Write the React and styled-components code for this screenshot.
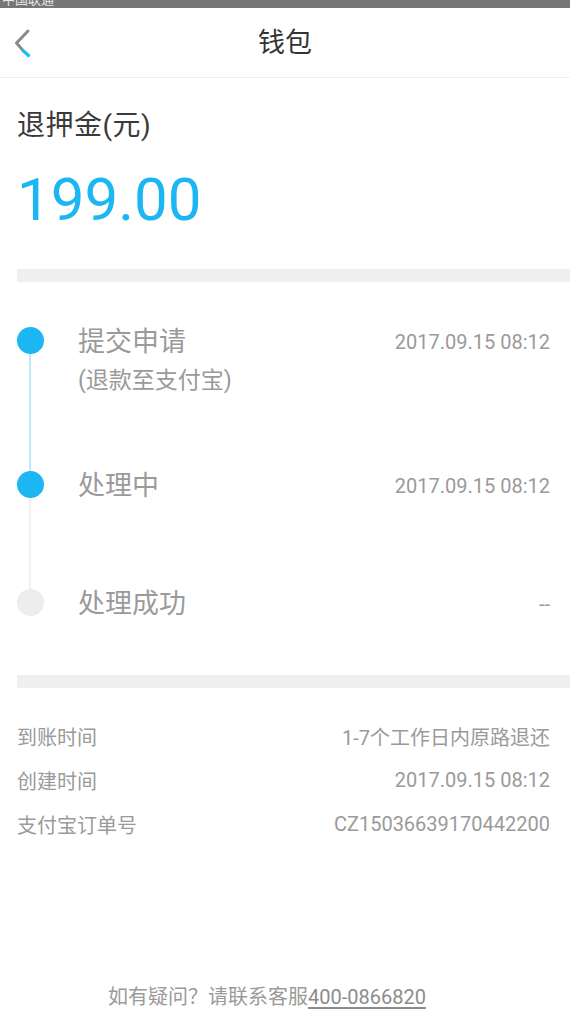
import React from "react";
import styled, { createGlobalStyle } from "styled-components";

const GlobalStyle = createGlobalStyle`
  html, body { margin: 0; padding: 0; background: #fff; }
  body { font-family: Roboto, "Noto Sans CJK SC", "Noto Sans", sans-serif; }
  * { box-sizing: border-box; }
`;

const Page = styled.div`
  min-height: 1024px;
  display: flex;
  flex-direction: column;
  background: #fff;
`;

const StatusBar = styled.div`
  height: 8px;
  background: #767676;
  overflow: hidden;
`;

const StatusText = styled.span`
  display: block;
  margin-top: -7px;
  padding-left: 2px;
  font-size: 13px;
  line-height: 14px;
  color: #e6e6e6;
`;

const NavBar = styled.header`
  height: 70px;
  display: grid;
  grid-template-columns: 70px 1fr 70px;
  align-items: center;
  border-bottom: 1px solid #efefef;
`;

const BackButton = styled.button`
  border: 0;
  background: none;
  padding: 0 0 0 12px;
  height: 100%;
  display: flex;
  align-items: center;
  cursor: pointer;
`;

const NavTitle = styled.h1`
  margin: 0;
  text-align: center;
  font-size: 27px;
  font-weight: 400;
  color: #333;
  line-height: 70px;
`;

const AmountBlock = styled.section`
  padding: 30px 17px 34px;
`;

const AmountLabel = styled.div`
  font-size: 28px;
  line-height: 36px;
  letter-spacing: 0.5px;
  color: #3a3a3a;
`;

const Amount = styled.div`
  margin-top: 21px;
  font-size: 60px;
  line-height: 70px;
  color: #1cb6f2;
`;

const Divider = styled.div`
  height: 13px;
  margin-left: 17px;
  background: #efefef;
`;

const Timeline = styled.section`
  padding: 45px 20px 0 17px;
`;

const Step = styled.div`
  display: grid;
  grid-template-columns: 26px 1fr auto;
  column-gap: 35px;
  height: ${(p) => p.$h}px;
`;

const Rail = styled.div`
  display: flex;
  flex-direction: column;
  align-items: center;
`;

const Dot = styled.div`
  width: 27px;
  height: 27px;
  flex: none;
  border-radius: 50%;
  background: ${(p) => (p.$done ? "#1cb6f2" : "#ededed")};
`;

const Connector = styled.div`
  flex: 1;
  width: 2px;
  background: ${(p) => p.$color || "transparent"};
`;

const StepBody = styled.div`
  padding-top: 2px;
`;

const StepTitle = styled.div`
  font-size: 27px;
  line-height: 27px;
  color: #9a9a9a;
`;

const StepNote = styled.div`
  margin-top: 10px;
  font-size: 23px;
  line-height: 30px;
  color: #9a9a9a;
`;

const StepTime = styled.div`
  padding-top: 2px;
  font-size: 20px;
  line-height: 27px;
  color: #9a9a9a;
  text-align: right;
`;

const Info = styled.section`
  padding: 26px 20px 0 17px;
`;

const InfoRow = styled.div`
  display: flex;
  justify-content: space-between;
  align-items: center;
  height: 44px;
  font-size: 20px;
  color: #9a9a9a;
`;

const Footer = styled.footer`
  margin-top: auto;
  padding: 0 36px 12px 0;
  text-align: center;
  font-size: 20px;
  line-height: 30px;
  color: #9a9a9a;
`;

const Phone = styled.a`
  color: #8c8c8c;
  text-decoration: underline;
  text-underline-offset: 3px;
`;

function BackIcon() {
  return (
    <svg width="24" height="34" viewBox="12 25 24 34" aria-hidden="true">
      <path d="M28 30 L16.5 42 L23 49.5" fill="none" stroke="#8a8a8a" strokeWidth="3" strokeLinecap="round" strokeLinejoin="round" />
      <path d="M23.5 50 L28.5 54.5" fill="none" stroke="#1cc0f0" strokeWidth="3.2" strokeLinecap="round" />
    </svg>
  );
}

const steps = [
  { title: "提交申请", note: "(退款至支付宝)", time: "2017.09.15 08:12", done: true, line: "#bfe8f8", h: 144 },
  { title: "处理中", time: "2017.09.15 08:12", done: true, line: "#f1f1f1", h: 118 },
  { title: "处理成功", time: "--", done: false, h: 86 },
];

const info = [
  ["到账时间", "1-7个工作日内原路退还"],
  ["创建时间", "2017.09.15 08:12"],
  ["支付宝订单号", "CZ15036639170442200"],
];

export default function App() {
  return (
    <Page>
      <GlobalStyle />
      <StatusBar>
        <StatusText>中国联通</StatusText>
      </StatusBar>
      <NavBar>
        <BackButton aria-label="返回">
          <BackIcon />
        </BackButton>
        <NavTitle>钱包</NavTitle>
        <span />
      </NavBar>
      <AmountBlock>
        <AmountLabel>退押金(元)</AmountLabel>
        <Amount>199.00</Amount>
      </AmountBlock>
      <Divider />
      <Timeline>
        {steps.map((s) => (
          <Step key={s.title} $h={s.h}>
            <Rail>
              <Dot $done={s.done} />
              <Connector $color={s.line} />
            </Rail>
            <StepBody>
              <StepTitle>{s.title}</StepTitle>
              {s.note && <StepNote>{s.note}</StepNote>}
            </StepBody>
            <StepTime>{s.time}</StepTime>
          </Step>
        ))}
      </Timeline>
      <Divider />
      <Info>
        {info.map(([k, v]) => (
          <InfoRow key={k}>
            <span>{k}</span>
            <span>{v}</span>
          </InfoRow>
        ))}
      </Info>
      <Footer>
        如有疑问？请联系客服<Phone href="tel:4000866820">400-0866820</Phone>
      </Footer>
    </Page>
  );
}
